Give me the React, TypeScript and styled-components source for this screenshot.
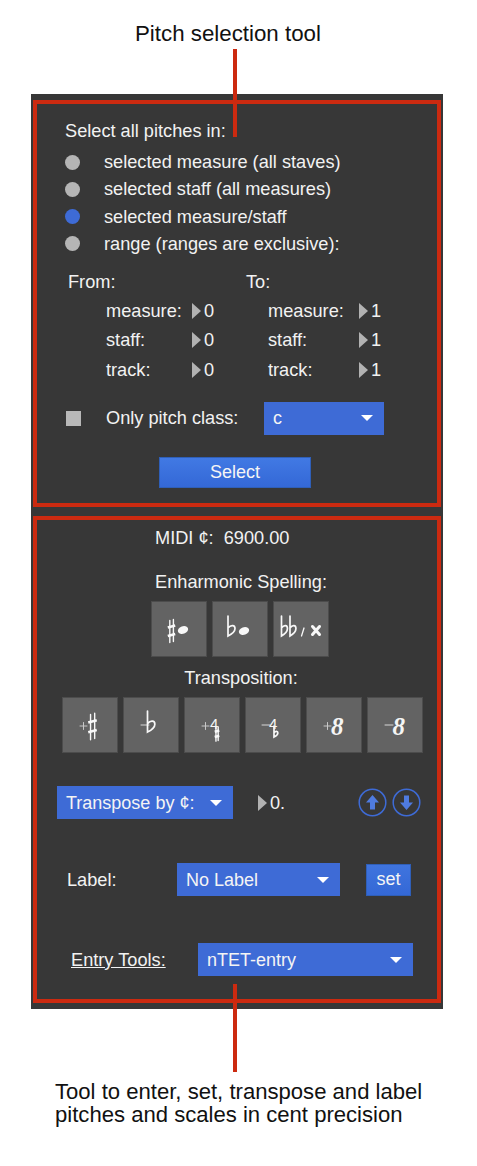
import React from "react";
import styled, { createGlobalStyle } from "styled-components";

const GlobalStyle = createGlobalStyle`
    html, body {
        margin: 0;
        padding: 0;
        background: #fff;
    }
    body {
        font-family: "Liberation Sans", Arial, sans-serif;
    }
`;

const BLUE = "#3e6bd6";
const RED = "#cc2a10";

const Page = styled.div`
    position: relative;
    width: 477px;
    height: 1166px;
    overflow: hidden;
    display: flex;
    flex-direction: column;
`;

const Title = styled.div`
    height: 94px;
    padding-top: 21px;
    box-sizing: border-box;
    padding-left: 135px;
    font-size: 22.300px;
    line-height: 25px;
    color: #111;
`;

const Panel = styled.div`
    margin-left: 31px;
    width: 412px;
    height: 915px;
    box-sizing: border-box;
    background: #373737;
    padding: 6px 2px 0;
    display: flex;
    flex-direction: column;
    gap: 9px;
`;

const RedBox = styled.section<{ $h: number }>`
    height: ${(p) => p.$h}px;
    box-sizing: border-box;
    border: 4px solid ${RED};
    color: #f2f2f2;
    font-size: 18.200px;
    line-height: 20px;
    display: flex;
    flex-direction: column;
`;

const Leader = styled.div<{ $top: number; $h: number }>`
    position: absolute;
    left: 233px;
    top: ${(p) => p.$top}px;
    width: 4px;
    height: ${(p) => p.$h}px;
    background: ${RED};
`;

const Caption = styled.div`
    margin: 71px 0 0 55px;
    font-size: 22.100px;
    line-height: 23px;
    color: #111;
    white-space: nowrap;
`;

const Heading = styled.div`
    margin: 17px 0 0 28px;
`;

const Radios = styled.div`
    margin: 11px 0 0 28px;
    display: flex;
    flex-direction: column;
    gap: 7.300px;
`;

const RadioRow = styled.div`
    display: flex;
    align-items: center;
    gap: 24px;
    height: 20px;
`;

const Dot = styled.span<{ $on?: boolean }>`
    width: 15px;
    height: 15px;
    border-radius: 50%;
    background: ${(p) => (p.$on ? BLUE : "#b5b5b5")};
`;

const RangeGrid = styled.div`
    margin: 18px 0 0 31px;
    display: grid;
    grid-template-columns: 178px 1fr;
`;

const RangeTitle = styled.div``;

const Fields = styled.div<{ $left: number }>`
    margin: 9px 0 0 ${(p) => p.$left}px;
    display: flex;
    flex-direction: column;
    gap: 9.500px;
`;

const FieldRow = styled.div<{ $w: number }>`
    display: grid;
    grid-template-columns: ${(p) => p.$w}px auto;
    height: 20px;
    align-items: center;
`;

const NumBox = styled.span`
    display: inline-flex;
    align-items: center;
    gap: 3px;
`;

const Arrow = styled.span`
    width: 0;
    height: 0;
    border-left: 9px solid #b2b2b2;
    border-top: 8px solid transparent;
    border-bottom: 8px solid transparent;
`;

const PitchRow = styled.div`
    margin: 22px 0 0 29px;
    display: flex;
    align-items: center;
`;

const Check = styled.span`
    width: 15px;
    height: 15px;
    background: #b8b8b8;
    margin-right: 25px;
`;

const PitchLabel = styled.span`
    width: 158px;
`;

const Menu = styled.div<{ $w: number }>`
    width: ${(p) => p.$w}px;
    height: 33px;
    box-sizing: border-box;
    padding: 0 11px 0 9px;
    background: ${BLUE};
    display: flex;
    align-items: center;
    justify-content: space-between;
    color: #f4f4f4;
    font-size: 18px;
`;

const Caret = styled.span`
    width: 0;
    height: 0;
    border-top: 6px solid #fff;
    border-left: 6px solid transparent;
    border-right: 6px solid transparent;
`;

const SelectButton = styled.button`
    display: block;
    margin: 22px 0 0 122px;
    width: 152px;
    height: 31px;
    padding: 0;
    border: 1px solid #2f5fb8;
    background: linear-gradient(#4179e4, #3468d6);
    color: #f5f5f5;
    font: 18px "Liberation Sans", Arial, sans-serif;
`;

const Midi = styled.div`
    margin: 8px 0 0 118px;
`;

const SubHead = styled.div<{ $mt: number }>`
    margin-top: ${(p) => p.$mt}px;
    text-align: center;
    margin-left: 8px;
`;

const ToolRow = styled.div<{ $mt: number; $left: number }>`
    margin: ${(p) => p.$mt}px 0 0 ${(p) => p.$left}px;
    display: flex;
    gap: 5px;
`;

const Tool = styled.div`
    width: 56px;
    height: 56px;
    box-sizing: border-box;
    border: 1px solid #4c4c4c;
    background: #636363;
`;

const GlyphSvg = styled.svg`
    display: block;
    fill: none;
    stroke: #f8f8f8;
    stroke-linecap: round;
    text {
        stroke: none;
        fill: #f5f5f5;
        font-family: "Liberation Sans", Arial, sans-serif;
    }
`;

// viewBox starts at 1,1 so coordinates are measured from the tool's outer corner
const Glyph = ({ children }: { children: React.ReactNode }) => (
    <GlyphSvg width="54" height="54" viewBox="1 1 54 54">
        {children}
    </GlyphSvg>
);

const Bold8 = styled.text`
    font-family: "Liberation Serif", serif !important;
    font-weight: bold;
    font-style: italic;
`;

const Sharp = ({ x, y, s = 1 }: { x: number; y: number; s?: number }) => (
    <g transform={`translate(${x} ${y}) scale(${s})`}>
        <path
            d="M-1.700 -10.500V11.500M1.900 -11.500V10.500"
            strokeWidth="1.400"
            vectorEffect="non-scaling-stroke"
        />
        <path
            d="M-3.700 -3.500L3.700 -5.500M-3.700 5L3.700 3"
            strokeWidth="2.600"
            strokeLinecap="butt"
            vectorEffect="non-scaling-stroke"
        />
    </g>
);

// x, y is the top of the stem
const Flat = ({ x, y, s = 1, sx = 1 }: { x: number; y: number; s?: number; sx?: number }) => (
    <g transform={`translate(${x} ${y}) scale(${s * sx} ${s})`}>
        <path
            d="M0 0V20C3 18.500 7 15.500 7 12.500C7 9 3 8.500 0 12"
            strokeWidth="1.700"
            vectorEffect="non-scaling-stroke"
        />
    </g>
);

const Note = ({ x, y }: { x: number; y: number }) => (
    <ellipse cx={x} cy={y} rx="5.300" ry="3.800" transform={`rotate(-20 ${x} ${y})`} fill="#f8f8f8" stroke="none" />
);

const Plus = ({ x, y }: { x: number; y: number }) => (
    <path d={`M${x} ${y}h7M${x + 3.5} ${y - 3.5}v7`} stroke="#c8c8c8" strokeWidth="1" />
);

const Minus = ({ x, y }: { x: number; y: number }) => (
    <path d={`M${x} ${y}h8`} stroke="#d8d8d8" strokeWidth="1" />
);

const TransposeRow = styled.div`
    margin: 33px 0 0 20px;
    display: flex;
    align-items: center;
`;

const Stepper = styled.div`
    margin-left: 25px;
    display: flex;
    align-items: center;
    gap: 3px;
`;

const RoundButtons = styled.div`
    margin-left: auto;
    margin-right: 16px;
    display: flex;
    gap: 5px;
`;

const LabelRow = styled.div`
    margin: 44px 0 0 30px;
    display: flex;
    align-items: center;
`;

const LabelText = styled.span`
    width: 110px;
`;

const SetButton = styled.button`
    margin-left: 26px;
    width: 45px;
    height: 32px;
    padding: 0;
    border: 1px solid #2f5fb8;
    background: linear-gradient(#3f74de, #3468d6);
    color: #f5f5f5;
    font: 18px "Liberation Sans", Arial, sans-serif;
`;

const EntryRow = styled.div`
    margin: 47px 0 0 34px;
    display: flex;
    align-items: center;
`;

const EntryLabel = styled.span`
    width: 127px;
    text-decoration: underline;
`;

const RoundIcon = ({ down }: { down?: boolean }) => (
    <svg width="29" height="29" viewBox="0 0 29 29" fill="none">
        <circle cx="14.500" cy="14.500" r="13.300" stroke={BLUE} strokeWidth="1.500" />
        <path
            d={down ? "M14.500 22L21 14.500H17V7.500H12V14.500H8Z" : "M14.500 7L21 14.500H17V21.500H12V14.500H8Z"}
            fill="#4f7be0"
        />
    </svg>
);

const Field = ({ name, w, value }: { name: string; w: number; value: string }) => (
    <FieldRow $w={w}>
        <span>{name}</span>
        <NumBox>
            <Arrow />
            {value}
        </NumBox>
    </FieldRow>
);

const radios = [
    { label: "selected measure (all staves)" },
    { label: "selected staff (all measures)" },
    { label: "selected measure/staff", on: true },
    { label: "range (ranges are exclusive):" },
];

const App = () => (
    <Page>
        <GlobalStyle />
        <Title>Pitch selection tool</Title>
        <Panel>
            <RedBox $h={407}>
                <Heading>Select all pitches in:</Heading>
                <Radios>
                    {radios.map((r) => (
                        <RadioRow key={r.label}>
                            <Dot $on={r.on} />
                            <span>{r.label}</span>
                        </RadioRow>
                    ))}
                </Radios>
                <RangeGrid>
                    <div>
                        <RangeTitle>From:</RangeTitle>
                        <Fields $left={38}>
                            <Field name="measure:" w={86} value="0" />
                            <Field name="staff:" w={86} value="0" />
                            <Field name="track:" w={86} value="0" />
                        </Fields>
                    </div>
                    <div>
                        <RangeTitle>To:</RangeTitle>
                        <Fields $left={22}>
                            <Field name="measure:" w={91} value="1" />
                            <Field name="staff:" w={91} value="1" />
                            <Field name="track:" w={91} value="1" />
                        </Fields>
                    </div>
                </RangeGrid>
                <PitchRow>
                    <Check />
                    <PitchLabel>Only pitch class:</PitchLabel>
                    <Menu $w={120}>
                        <span>c</span>
                        <Caret />
                    </Menu>
                </PitchRow>
                <SelectButton>Select</SelectButton>
            </RedBox>
            <RedBox $h={487}>
                <Midi>MIDI ¢:&nbsp; 6900.00</Midi>
                <SubHead $mt={24}>Enharmonic Spelling:</SubHead>
                <ToolRow $mt={9} $left={114}>
                    <Tool>
                        <Glyph>
                            <Sharp x={20.500} y={30} />
                            <Note x={32} y={29} />
                        </Glyph>
                    </Tool>
                    <Tool>
                        <Glyph>
                            <Flat x={16} y={15} />
                            <Note x={32} y={30} />
                        </Glyph>
                    </Tool>
                    <Tool>
                        <Glyph>
                            <Flat x={8.500} y={15} sx={0.85} />
                            <Flat x={17} y={15} sx={0.85} />
                            <path d="M28.500 35L31 27" strokeWidth="1.300" />
                            <path d="M39.500 25.500L46.500 33.500M46.500 25.500L39.500 33.500" strokeWidth="3" />
                        </Glyph>
                    </Tool>
                </ToolRow>
                <SubHead $mt={11}>Transposition:</SubHead>
                <ToolRow $mt={9} $left={25}>
                    <Tool>
                        <Glyph>
                            <Plus x={18} y={29} />
                            <Sharp x={30.500} y={29.500} s={1.150} />
                        </Glyph>
                    </Tool>
                    <Tool>
                        <Glyph>
                            <Minus x={18} y={28} />
                            <Flat x={24.500} y={14} s={1.050} />
                        </Glyph>
                    </Tool>
                    <Tool>
                        <Glyph>
                            <Plus x={18} y={29} />
                            <text x="26" y="32" fontSize="15">4</text>
                            <Sharp x={33} y={37} s={0.620} />
                        </Glyph>
                    </Tool>
                    <Tool>
                        <Glyph>
                            <Minus x={17} y={28} />
                            <text x="24" y="32" fontSize="15">4</text>
                            <Flat x={29} y={29} s={0.550} />
                        </Glyph>
                    </Tool>
                    <Tool>
                        <Glyph>
                            <Plus x={18} y={29} />
                            <Bold8 x="25" y="38" fontSize="25">8</Bold8>
                        </Glyph>
                    </Tool>
                    <Tool>
                        <Glyph>
                            <Minus x={18} y={28} />
                            <Bold8 x="25.500" y="38" fontSize="25">8</Bold8>
                        </Glyph>
                    </Tool>
                </ToolRow>
                <TransposeRow>
                    <Menu $w={176}>
                        <span>Transpose by ¢:</span>
                        <Caret />
                    </Menu>
                    <Stepper>
                        <Arrow />
                        0.
                    </Stepper>
                    <RoundButtons>
                        <RoundIcon />
                        <RoundIcon down />
                    </RoundButtons>
                </TransposeRow>
                <LabelRow>
                    <LabelText>Label:</LabelText>
                    <Menu $w={163}>
                        <span>No Label</span>
                        <Caret />
                    </Menu>
                    <SetButton>set</SetButton>
                </LabelRow>
                <EntryRow>
                    <EntryLabel>Entry Tools:</EntryLabel>
                    <Menu $w={215}>
                        <span>nTET-entry</span>
                        <Caret />
                    </Menu>
                </EntryRow>
            </RedBox>
        </Panel>
        <Caption>
            Tool to enter, set, transpose and label
            <br />
            pitches and scales in cent precision
        </Caption>
        <Leader $top={49} $h={88} />
        <Leader $top={984} $h={88} />
    </Page>
);

export default App;
